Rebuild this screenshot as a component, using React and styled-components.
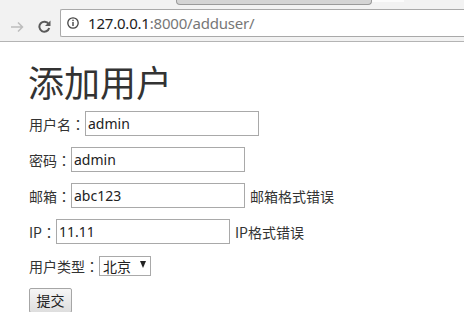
import styled, {createGlobalStyle} from 'styled-components'

const Global = createGlobalStyle`
  html, body {
    margin: 0;
    padding: 0;
    background: #fff;
    font-family: "Noto Sans CJK SC", "Noto Sans", sans-serif;
    color: #333;
  }
`;

const Chrome = styled.div`
  background: #f2f2f2;
  border-bottom: 1px solid #b4b4b4;
  height: 41px;
  display: flex;
  flex-direction: column;
  overflow: hidden;
`;

const TabStrip = styled.div`
  height: 5px;
  display: flex;
  padding-left: 176px;
`;

const Tab = styled.div`
  width: 194px;
  height: 4px;
  background: #d4d4d4;
  border: 1px solid #9a9a9a;
  border-top: none;
  border-radius: 0 0 4px 4px;
`;

const TabGhost = styled.div`
  width: 32px;
  height: 2px;
  background: #fbfbfb;
`;

const Toolbar = styled.div`
  display: flex;
  align-items: flex-start;
  padding-top: 4px;
`;

const NavIcon = styled.div`
  width: ${(p) => p.w}px;
  display: flex;
  justify-content: center;
  padding-top: ${(p) => p.top}px;
`;

const Omnibox = styled.div`
  margin-left: 4px;
  flex: 1;
  height: 26px;
  background: #fff;
  border: 1px solid #a9a9a9;
  border-right: none;
  border-radius: 2px 0 0 2px;
  display: flex;
  align-items: center;
  padding-left: 6px;
  gap: 9px;
`;

const Url = styled.div`
  font-family: "Noto Sans", sans-serif;
  font-size: 15px;
  color: #222;
  letter-spacing: -0.2px;
  span {
    color: #777;
  }
`;

const Page = styled.div`
  padding-left: 29px;
`;

const Title = styled.h1`
  margin: 19px 0 10px -1px;
  font-size: 36px;
  line-height: 40px;
  font-weight: 400;
  color: #333;
`;

const Form = styled.form`
  display: flex;
  flex-direction: column;
  gap: 11px;
`;

const Row = styled.div`
  display: flex;
  align-items: center;
  height: ${(p) => p.h || 25}px;
  font-size: 14px;
  line-height: 20px;
`;

const Label = styled.span`
  white-space: nowrap;
`;

const Colon = styled.span`
  font-family: "Noto Sans CJK JP", sans-serif;
`;

const Input = styled.input`
  box-sizing: border-box;
  width: 174px;
  height: 25px;
  margin: 0;
  border: 1px solid #a9a9a9;
  padding: 0 2px;
  font-family: "Noto Sans", "Noto Sans CJK SC", sans-serif;
  font-size: 14px;
  color: #222;
  outline: none;
`;

const Error = styled.span`
  margin-left: 5px;
  color: #333;
`;

const SelectWrap = styled.div`
  position: relative;
  display: flex;
`;

const Select = styled.select`
  appearance: none;
  box-sizing: border-box;
  width: 52px;
  height: 20px;
  margin: 0;
  border: 1px solid #a9a9a9;
  border-radius: 0;
  background: #fff;
  padding: 0 0 0 3px;
  font-family: "Noto Sans CJK SC", sans-serif;
  font-size: 14px;
  line-height: 18px;
  color: #222;
`;

const Caret = styled.span`
  position: absolute;
  right: 5px;
  top: 5px;
  width: 0;
  height: 0;
  border-left: 3.5px solid transparent;
  border-right: 3.5px solid transparent;
  border-top: 7px solid #222;
  pointer-events: none;
`;

const Button = styled.button`
  box-sizing: border-box;
  width: 43px;
  height: 25px;
  margin: 1px 0 0;
  padding: 0;
  border: 1px solid #a6a6a6;
  border-radius: 2px;
  background: linear-gradient(#f6f6f6, #dedede);
  font-family: "Noto Sans CJK SC", sans-serif;
  font-size: 14px;
  color: #222;
`;

const ForwardIcon = () => (
  <svg width="14" height="12" viewBox="0 0 14 12">
    <path d="M1 6H12.5M8 1.5L12.5 6L8 10.5" fill="none" stroke="#bdbdbd" strokeWidth="1.5" />
  </svg>
);

const ReloadIcon = () => (
  <svg width="13" height="13" viewBox="0 0 13 13">
    <path d="M10.6 4A5 5 0 1 0 11.2 8" fill="none" stroke="#5a5a5a" strokeWidth="2" />
    <path d="M12.5 0.5V6H7Z" fill="#5a5a5a" />
  </svg>
);

const InfoIcon = () => (
  <svg width="12" height="12" viewBox="0 0 12 12">
    <circle cx="6" cy="6" r="5.2" fill="none" stroke="#444" strokeWidth="1.3" />
    <rect x="5.3" y="5" width="1.4" height="4" fill="#444" />
    <rect x="5.3" y="2.7" width="1.4" height="1.4" fill="#444" />
  </svg>
);

const App = () => {
  return (
    <>
      <Global />
      <Chrome>
        <TabStrip>
          <Tab />
          <TabGhost />
        </TabStrip>
        <Toolbar>
          <NavIcon w={33} top={12}><ForwardIcon /></NavIcon>
          <NavIcon w={23} top={11}><ReloadIcon /></NavIcon>
          <Omnibox>
            <InfoIcon />
            <Url>127.0.0.1<span>:8000/adduser/</span></Url>
          </Omnibox>
        </Toolbar>
      </Chrome>
      <Page>
        <Title>添加用户</Title>
        <Form>
          <Row>
            <Label>用户名<Colon>：</Colon></Label>
            <Input defaultValue="admin" />
          </Row>
          <Row>
            <Label>密码<Colon>：</Colon></Label>
            <Input defaultValue="admin" />
          </Row>
          <Row>
            <Label>邮箱<Colon>：</Colon></Label>
            <Input defaultValue="abc123" />
            <Error>邮箱格式错误</Error>
          </Row>
          <Row>
            <Label>IP<Colon>：</Colon></Label>
            <Input defaultValue="11.11" />
            <Error>IP格式错误</Error>
          </Row>
          <Row h={21}>
            <Label>用户类型<Colon>：</Colon></Label>
            <SelectWrap>
              <Select defaultValue="bj">
                <option value="bj">北京</option>
              </Select>
              <Caret />
            </SelectWrap>
          </Row>
          <Row>
            <Button type="button">提交</Button>
          </Row>
        </Form>
      </Page>
    </>
  );
};

export default App
